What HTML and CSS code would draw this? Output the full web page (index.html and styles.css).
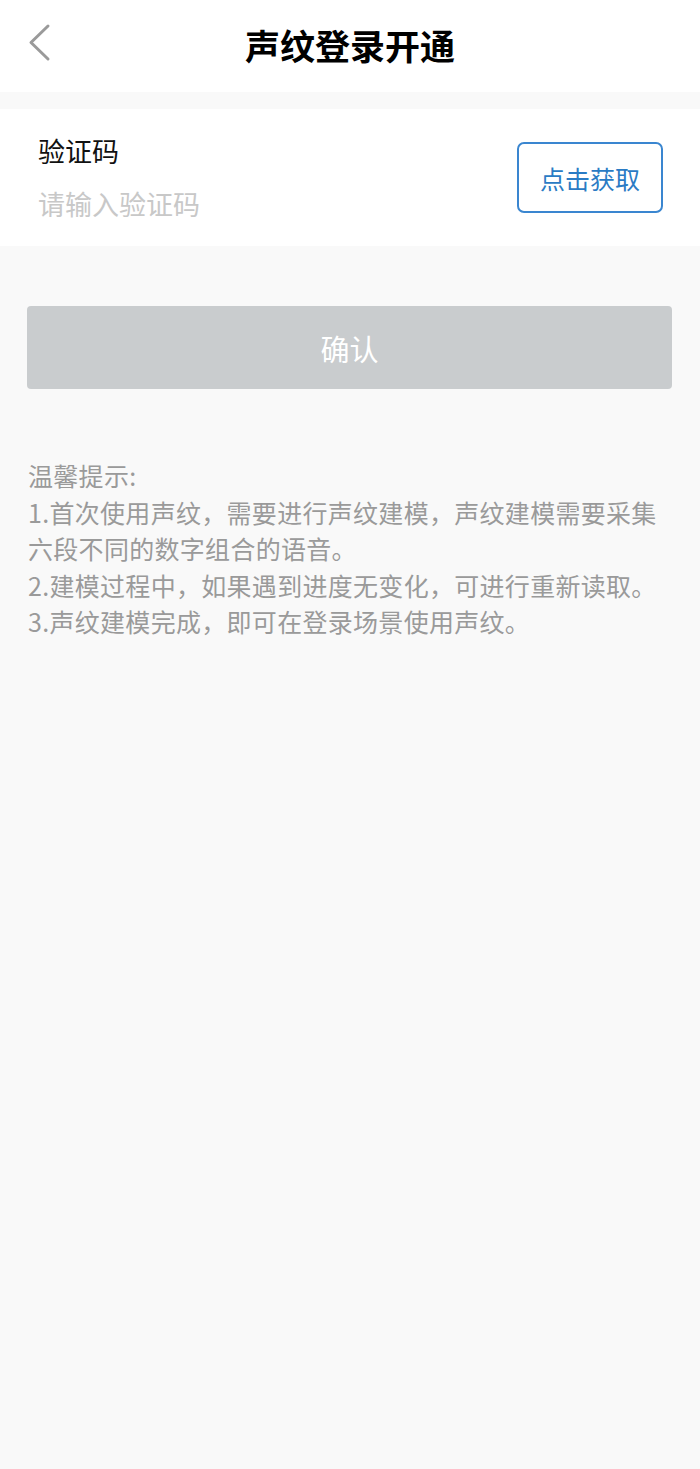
FILE: index.html
```html
<!DOCTYPE html>
<html lang="zh-CN">
<head>
<meta charset="utf-8">
<link rel="stylesheet" href="styles.css">
</head>
<body>
<header class="topbar">
  <div class="back">
    <svg width="24" height="40" viewBox="0 0 24 40"><path d="M20 3 L3 19.5 L20 36" fill="none" stroke="#9a9a9a" stroke-width="3" stroke-linecap="round" stroke-linejoin="round"/></svg>
  </div>
  <h1 class="title">声纹登录开通</h1>
</header>
<section class="card">
  <div class="field">
    <div class="label">验证码</div>
    <div class="placeholder">请输入验证码</div>
  </div>
  <div class="getcode">点击获取</div>
</section>
<div class="actions">
  <div class="confirm">确认</div>
</div>
<div class="tips">
  <p>温馨提示:</p>
  <p>1.首次使用声纹，需要进行声纹建模，声纹建模需要采集六段不同的数字组合的语音。</p>
  <p>2.建模过程中，如果遇到进度无变化，可进行重新读取。</p>
  <p>3.声纹建模完成，即可在登录场景使用声纹。</p>
</div>
</body>
</html>
```

FILE: styles.css
```css
html, body {
  margin: 0;
  padding: 0;
  background: #f9f9f9;
  font-family: "Noto Sans CJK SC", "Noto Sans", sans-serif;
}
body {
  width: 700px;
  min-height: 1469px;
}
.topbar {
  height: 92px;
  background: #ffffff;
  display: flex;
  align-items: center;
  justify-content: center;
  position: relative;
}
.back {
  position: absolute;
  left: 28px;
  top: 23px;
  width: 24px;
  height: 40px;
}
.title {
  margin: 0;
  font-size: 35px;
  font-weight: 700;
  color: #000;
  line-height: 1;
  margin-top: -4px;
}
.card {
  margin-top: 17px;
  background: #ffffff;
  height: 137px;
  display: flex;
  align-items: center;
  justify-content: space-between;
  padding: 0 38px 0 38px;
  box-sizing: border-box;
}
.field {
  display: flex;
  flex-direction: column;
  gap: 17px;
  margin-top: -1px;
}
.label {
  font-size: 27px;
  color: #111;
  line-height: 36px;
}
.placeholder {
  font-size: 27px;
  color: #c8c8c8;
  line-height: 36px;
}
.getcode {
  width: 146px;
  height: 71px;
  box-sizing: border-box;
  border: 2px solid #3a86d0;
  border-radius: 7px;
  color: #2a7bc4;
  font-size: 25px;
  display: flex;
  align-items: center;
  justify-content: center;
  margin-right: -1px;
  margin-top: 0;
}
.actions {
  padding: 60px 28px 0 27px;
}
.confirm {
  height: 83px;
  background: #c9ccce;
  border-radius: 4px;
  color: #ffffff;
  font-size: 29px;
  display: flex;
  align-items: center;
  justify-content: center;
}
.tips {
  padding: 68px 28px 0 28px;
  color: #9a9a9a;
  font-size: 25px;
  letter-spacing: 0.3px;
  line-height: 36.5px;
}
.tips p {
  margin: 0;
}
```
